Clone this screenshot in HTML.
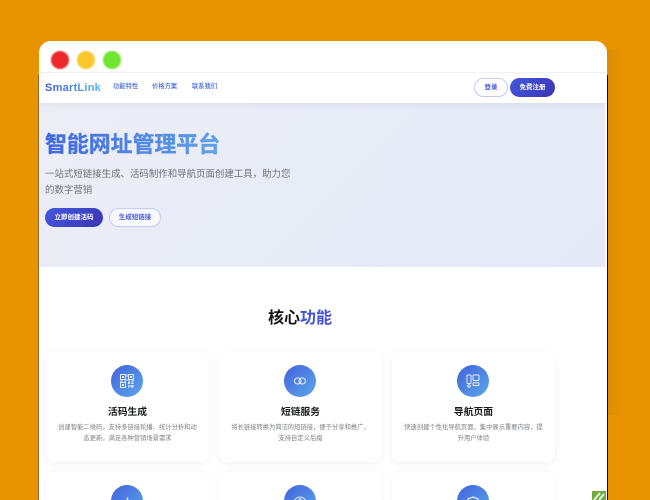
<!DOCTYPE html>
<html lang="zh">
<head>
<meta charset="utf-8">
<style>
*{box-sizing:border-box;margin:0;padding:0}
html,body{width:650px;height:500px;overflow:hidden;background:#e89400;font-family:"Liberation Sans","Noto Sans CJK SC",sans-serif}
body{position:relative}
.abs{position:absolute}
.shadow{left:600px;top:50px;width:24px;height:365px;background:linear-gradient(90deg,#d98b07,#e89400)}
.win{position:absolute;left:39px;top:41px;width:568px;height:459px;background:#fff;border-radius:12px 12px 0 0;overflow:hidden}
.bar{position:absolute;left:0;top:0;width:568px;height:32px;background:#fff;border-bottom:1px solid #f1f2f5}
.dot{position:absolute;top:10px;width:18px;height:18px;border-radius:50%;filter:blur(.7px)}
.nav{position:absolute;left:0;top:32px;width:568px;height:30px;background:#fff;box-shadow:0 2px 5px rgba(60,70,120,.08);z-index:2}
.logo{position:absolute;left:6px;top:8px;font-size:11px;line-height:15px;font-weight:700;letter-spacing:.25px;background:linear-gradient(90deg,#3f55d8,#57b4ea);-webkit-background-clip:text;background-clip:text;color:transparent}
.nl{position:absolute;top:8px;font-size:6.3px;line-height:12px;font-weight:500;color:#3f63e0;white-space:nowrap}
.btn{position:absolute;border-radius:12px;font-size:6.5px;font-weight:700;text-align:center;white-space:nowrap}
.pri{background:linear-gradient(135deg,#4458de,#3a35b4);color:#fff}
.sec{background:rgba(255,255,255,.6);border:1px solid #c3caf2;color:#4a5bdc}
.hero{position:absolute;left:0;top:62px;width:566px;height:164px;background:linear-gradient(135deg,#eceef6,#e3e9f7)}
.h1{position:absolute;left:6px;top:28px;font-size:21.9px;line-height:28px;font-weight:700;white-space:nowrap;background:linear-gradient(90deg,#4267dc,#5fa3e8);-webkit-background-clip:text;background-clip:text;color:transparent;-webkit-text-stroke:.25px rgba(74,125,225,.7)}
.sub{position:absolute;left:6px;top:64px;width:250px;font-size:9.45px;line-height:15.5px;color:#6d7078}
.h2{position:absolute;left:0;top:266px;width:522px;text-align:center;font-size:16px;line-height:24px;font-weight:700;color:#16171c}
.h2 span{color:#3f52d8}
.card{position:absolute;width:163px;height:110px;background:#fff;border-radius:8px;box-shadow:0 2px 8px rgba(40,50,90,.07)}
.low{height:28px;border-radius:8px 8px 0 0;overflow:hidden;box-shadow:0 0 6px rgba(40,50,90,.05)}
.ic{position:absolute;left:65px;top:12.500px;width:32px;height:32px;border-radius:50%;background:linear-gradient(135deg,#4361dc,#5ba8ea)}
.ic svg{position:absolute;left:8px;top:8px;width:16px;height:16px}
.low .ic svg{top:10px}
.t{position:absolute;left:0;width:100%;top:53px;text-align:center;font-size:9.800px;line-height:16px;font-weight:700;color:#1b1c20}
.d{position:absolute;left:10px;right:10px;top:71px;text-align:center;font-size:6.3px;line-height:10.5px;color:#7b7d83}
</style>
</head>
<body>
<div class="abs shadow"></div>
<div class="abs" style="left:38px;top:75px;width:1px;height:425px;background:rgba(70,70,80,.55)"></div>
<div class="abs" style="left:607px;top:75px;width:1px;height:425px;background:#111"></div>
<div class="win">
  <div class="bar">
    <div class="dot" style="left:12px;background:#ea2a2a"></div>
    <div class="dot" style="left:38px;background:#fdc62c"></div>
    <div class="dot" style="left:64px;background:#70e42f"></div>
  </div>
  <div class="nav">
    <div class="logo">SmartLink</div>
    <div class="nl" style="left:74px">功能特性</div>
    <div class="nl" style="left:113px">价格方案</div>
    <div class="nl" style="left:153px">联系我们</div>
    <div class="btn sec" style="left:435px;top:5px;width:34px;height:19px;line-height:17px;background:#fff">登录</div>
    <div class="btn pri" style="left:471px;top:5px;width:45px;height:19px;line-height:19px">免费注册</div>
  </div>
  <div class="hero">
    <div class="h1">智能网址管理平台</div>
    <div class="sub">一站式短链接生成、活码制作和导航页面创建工具，助力您的数字营销</div>
    <div class="btn pri" style="left:6px;top:105px;width:58px;height:19px;line-height:19px;border-radius:10px">立即创建活码</div>
    <div class="btn sec" style="left:70px;top:105px;width:52px;height:19px;line-height:17px;border-radius:10px">生成短链接</div>
  </div>
  <div class="h2">核心<span>功能</span></div>

  <div class="card" style="left:7px;top:311px">
    <div class="ic"><svg viewBox="0 0 16 16" fill="#dfe7fb"><path d="M1.500 1.500h5v5h-5zM9.500 1.500h5v5h-5zM1.500 9.500h5v5h-5z" fill="none" stroke="#e4eafc" stroke-width="1"/><path d="M3 3h2v2H3zM11 3h2v2h-2zM3 11h2v2H3zM7.500 1h1v3h-1zM7.500 6h1v2h-1zM1 7.500h3v1H1zM5 7.500h2v1H5zM9 7.500h2v1H9zM12 7.500h3v1h-3zM9 9h2v2H9zM12 9.500h2.500v1.500H12zM9 12h1.500v2.500H9zM11.500 12h3v2.500h-3z"/></svg></div>
    <div class="t">活码生成</div>
    <div class="d">创建智能二维码，支持多链接轮播、统计分析和动态更新，满足各种营销场景需求</div>
  </div>
  <div class="card" style="left:180px;top:311px">
    <div class="ic"><svg viewBox="0 0 16 16" fill="none" stroke="#e8eefd" stroke-width="1.100"><rect x="2.500" y="5" width="6.500" height="6" rx="3"/><rect x="7" y="5" width="6.500" height="6" rx="3"/></svg></div>
    <div class="t">短链服务</div>
    <div class="d">将长链接转换为简洁的短链接，便于分享和推广，支持自定义后缀</div>
  </div>
  <div class="card" style="left:353px;top:311px">
    <div class="ic"><svg viewBox="0 0 16 16" fill="none" stroke="#e8eefd" stroke-width="1"><rect x="2" y="2" width="4" height="8.500" rx=".7"/><rect x="8" y="2" width="6" height="5.500" rx=".7"/><rect x="8" y="9.800" width="6" height="2.700" rx=".7"/><circle cx="4" cy="13" r="1.300"/></svg></div>
    <div class="t">导航页面</div>
    <div class="d">快速创建个性化导航页面，集中展示重要内容，提升用户体验</div>
  </div>

  <div class="card low" style="left:7px;top:431px">
    <div class="ic"><svg viewBox="0 0 16 16" fill="none" stroke="#e8eefd" stroke-width="1.500"><path d="M8.500 2.500v11M5 9v5M11.500 6v8"/></svg></div>
  </div>
  <div class="card low" style="left:180px;top:431px">
    <div class="ic"><svg viewBox="0 0 16 16" fill="none" stroke="#e8eefd" stroke-width="1.100"><circle cx="8" cy="8" r="6"/><circle cx="8" cy="4.800" r="1"/><circle cx="5" cy="7" r="1"/><circle cx="11" cy="7" r="1"/></svg></div>
  </div>
  <div class="card low" style="left:353px;top:431px">
    <div class="ic"><svg viewBox="0 0 16 16" fill="none" stroke="#e8eefd" stroke-width="1.200"><path d="M8 2l5 1.800v4.700c0 2.800-2.300 4.500-5 5.500-2.700-1-5-2.700-5-5.500V3.800z"/></svg></div>
  </div>
</div>
<svg class="abs" style="left:592px;top:491px" width="14" height="9" viewBox="0 0 14 9"><rect width="14" height="9" fill="#6fae3e"/><path d="M2 9l6-7M7 9l5-6" stroke="#e8f2df" stroke-width="2" fill="none"/></svg>
</body>
</html>
